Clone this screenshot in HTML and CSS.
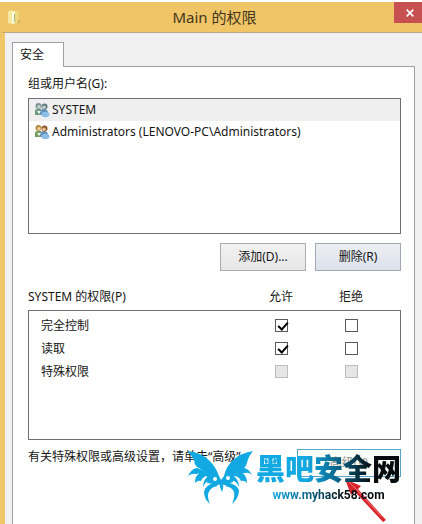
FILE: index.html
```
<!DOCTYPE html>
<html lang="zh-CN">
<head>
<meta charset="utf-8">
<title>Main 的权限</title>
<link rel="stylesheet" href="styles.css">
</head>
<body>
<main class="window">
  <header class="titlebar">
    <svg class="folder" viewBox="0 0 14 16" aria-hidden="true">
      <path d="M1 2l5-1v14l-5-1z" fill="#f6e9a4"/>
      <path d="M6 2h6v12l-6 1z" fill="#eed77c"/>
      <path d="M5 3l3-1v12l-3 1z" fill="#fffbd8"/>
      <path d="M7.500 5v8" stroke="#9fb88d" fill="none"/>
      <path d="M12 10l1 1v3l-3 .5" fill="#d3b657"/>
    </svg>
    <h1 class="title">Main 的权限</h1>
    <button class="close" type="button" aria-label="关闭">
      <svg viewBox="0 0 8 8" aria-hidden="true"><path d="M.7.7l6.600 6.600M7.300.7L.7 7.300" stroke="#fff" stroke-width="1.700"/></svg>
    </button>
  </header>
  <div class="content">
    <div class="tabs" role="tablist"><button class="tab" type="button" role="tab" aria-selected="true">安全</button></div>
    <section class="panel">
      <p class="caption">组或用户名(G):</p>
      <ul class="box users">
        <li class="user selected">
          <svg class="people" viewBox="0 0 16 16" aria-hidden="true">
            <path d="M1 13V9q0-2 3-2h3v6z" fill="#6d9a80"/><circle cx="4.500" cy="4" r="3" fill="#7e9494"/><circle cx="5" cy="4.800" r="1.700" fill="#c9d3cc"/>
            <path d="M6 13V9q1-2 4-2t4 3v3z" fill="#6390b5"/><circle cx="10.500" cy="4.500" r="3" fill="#61787f"/><circle cx="10" cy="5.200" r="1.800" fill="#c3cfd0"/>
            <ellipse cx="11.500" cy="12.500" rx="4" ry="2.800" fill="#8bbde6"/><path d="M3 9l2 3 2-3" fill="#eef6ef"/>
          </svg>SYSTEM</li>
        <li class="user">
          <svg class="people" viewBox="0 0 16 16" aria-hidden="true">
            <path d="M1 13V9q0-2 3-2h3v6z" fill="#759c62"/><circle cx="4.500" cy="4" r="3" fill="#b5893c"/><circle cx="5" cy="4.800" r="1.700" fill="#f0d3a0"/>
            <path d="M6 13V9q1-2 4-2t4 3v3z" fill="#6390b5"/><circle cx="10.500" cy="4.500" r="3" fill="#8a5a2c"/><circle cx="10" cy="5.200" r="1.800" fill="#e9c08e"/>
            <ellipse cx="11.500" cy="12.500" rx="4" ry="2.800" fill="#8bbde6"/><path d="M3 9l2 3 2-3" fill="#eef6ef"/>
          </svg>Administrators (LENOVO-PC\Administrators)</li>
      </ul>
      <div class="actions">
        <button class="button" type="button">添加(D)...</button>
        <button class="button cool" type="button">删除(R)</button>
      </div>
      <div class="heading">
        <span>SYSTEM 的权限(P)</span><span class="column">允许</span><span class="column">拒绝</span>
      </div>
      <div class="box permissions">
        <table>
          <tr><th scope="row">完全控制</th><td><input type="checkbox" checked aria-label="完全控制 允许"></td><td><input type="checkbox" aria-label="完全控制 拒绝"></td></tr>
          <tr><th scope="row">读取</th><td><input type="checkbox" checked aria-label="读取 允许"></td><td><input type="checkbox" aria-label="读取 拒绝"></td></tr>
          <tr><th scope="row">特殊权限</th><td><input type="checkbox" disabled aria-label="特殊权限 允许"></td><td><input type="checkbox" disabled aria-label="特殊权限 拒绝"></td></tr>
        </table>
      </div>
      <footer class="advanced">
        <p>有关特殊权限或高级设置，请单击“高级”。</p>
        <button class="button faint" type="button">高级(V)</button>
        <svg class="arrow" viewBox="0 0 42 44" aria-hidden="true">
          <path d="M0 0L16 7L13 10L41 41L38 43L10 13L6 16z" fill="#d8242c"/><path d="M2 1L11 10L37 38" stroke="#ef7777" fill="none"/>
        </svg>
        <div class="watermark">
          <svg class="bat" viewBox="0 0 68 56" aria-hidden="true">
            <g fill="#12a9e3">
              <path d="M0 0Q11 1 18 6Q28 13 32 25L34 29L37 25Q39 16 45 10Q53 2 66 0Q61 6 60 12Q58 19 50 22Q46 25 46 31L41 33Q36 32 34 35Q31 32 27 33L20 32Q22 26 18 23Q16 19 10 16Q7 13 7 9Q5 4 0 0z"/>
              <path d="M1 25Q5 17 10 17Q17 19 21 24Q15 21 9 23Q5 22 1 25zM8 32Q8 24 13 22Q18 22 21 25Q16 25 14 30Q11 29 8 32zM16 36Q16 28 22 25L25 30Q20 28 16 36z"/>
              <path d="M65 24Q62 18 57 17Q50 19 47 23Q52 21 58 22Q62 21 65 24zM60 32Q60 24 54 21Q49 22 46 25Q52 25 54 30Q57 29 60 32zM52 36Q52 28 46 25L43 30Q48 28 52 36z"/>
              <path d="M29 31Q18 34 17 41Q17 48 23 53Q19 44 23 39Q26 35 33 35zM38 31Q50 33 52 39Q52 47 45 53Q49 44 46 39Q43 35 35 35z"/>
              <path d="M32 34h5l-2 7z"/>
            </g>
            <circle cx="28" cy="28" r="2" fill="#fff"/><circle cx="41" cy="27" r="2" fill="#fff"/>
            <path d="M30 34l2 4 1-4zM36 34l1 4 2-4z" fill="#fff"/>
          </svg>
          <div class="brand"><strong class="brand-name">黑吧安全网</strong><span class="brand-url">www.myhack58.com</span></div>
        </div>
      </footer>
    </section>
  </div>
</main>
</body>
</html>
```
FILE: styles.css
```
* { box-sizing: border-box; }
html, body { height: 100%; }
body {
  margin: 0;
  overflow: hidden;
  background: #fff;
  color: #151515;
  font: 12px/16px "Noto Sans", "Noto Sans CJK SC", sans-serif;
}
p, h1, ul { margin: 0; padding: 0; }
button { font: inherit; color: inherit; }

.window {
  display: flex;
  flex-direction: column;
  height: 100%;
  padding-top: 2px;
}
.titlebar {
  display: flex;
  align-items: flex-start;
  height: 30px;
  flex: none;
  padding-left: 7px;
  background: #efc567;
}
.folder { width: 14px; height: 16px; margin-top: 7px; }
.title {
  flex: 1;
  padding-left: 14px;
  text-align: center;
  font-size: 15px;
  font-weight: 400;
  line-height: 30px;
  color: #44361c;
}
.close {
  display: grid;
  place-items: center;
  width: 28px;
  height: 21px;
  padding: 0 0 0 4px;
  border: 0;
  background: #c75050;
}
.close svg { width: 8px; height: 8px; }
.content {
  display: flex;
  flex-direction: column;
  flex: 1;
  padding: 9px 7px 0;
  border-left: 5px solid #efc567;
  border-top: 1px solid #b9a684;
  background: #f0f0f0;
}
.tabs { display: flex; }
.tab {
  width: 52px;
  height: 25px;
  margin-bottom: -1px;
  padding: 0 12px 0 0;
  border: 1px solid #a0a0a4;
  border-bottom: 0;
  background: #fff;
  z-index: 1;
}
.panel {
  flex: 1;
  padding: 9px 13px 0 15px;
  border: 1px solid #a0a0a4;
  border-bottom: 0;
  background: #fff;
}
.caption { margin-bottom: 6px; }
.box { border: 1px solid #707074; }
.users { height: 136px; list-style: none; }
.user {
  display: flex;
  align-items: center;
  height: 22px;
  padding-left: 5px;
  gap: 2px;
}
.selected { background: #efefef; }
.people { width: 16px; height: 16px; }
.actions {
  display: flex;
  justify-content: flex-end;
  gap: 9px;
  margin: 9px 0 18px;
}
.button {
  width: 86px;
  height: 28px;
  padding: 0;
  border: 1px solid #acacac;
  background: linear-gradient(#f2f2f2, #e6e6e6);
}
.cool { border-color: #a0a8b4; background: linear-gradient(#eceef2, #dce2ec); }
.heading, .permissions tr {
  display: grid;
  grid-template-columns: 1fr 70px 70px;
  align-items: center;
}
.heading { margin-bottom: 5px; padding-right: 15px; }
.column { text-align: center; }
.permissions { height: 130px; padding: 3px 14px 0 12px; }
.permissions table, .permissions tbody { display: block; }
.permissions tr { height: 23px; }
.permissions th { padding: 0; text-align: left; font-weight: 400; }
.permissions td { display: flex; justify-content: center; padding: 0; }
.permissions input {
  appearance: none;
  width: 13px;
  height: 13px;
  margin: 0;
  border: 1px solid #5a5a5a;
  background: #fff;
}
.permissions input:checked::after {
  content: "";
  display: block;
  width: 4px;
  height: 8px;
  margin-left: 4px;
  border: solid #000;
  border-width: 0 2px 2px 0;
  transform: rotate(42deg);
}
.permissions input:disabled { border-color: #bcbcbc; background: #e6e6e6; }
.advanced {
  position: relative;
  display: flex;
  justify-content: space-between;
  padding-top: 9px;
}
.advanced p { white-space: nowrap; }
.faint {
  flex: none;
  width: 104px;
  border-color: #58a5c9;
  background: #fbfdf8;
  color: #8c958f;
  position: absolute;
  right: 0;
}
.watermark {
  position: absolute;
  top: 11px;
  right: 0;
  display: flex;
  gap: 1px;
}
.bat { width: 68px; height: 56px; }
.brand { display: flex; flex-direction: column; align-items: center; gap: 4px; }
.brand-name, .brand-url {
  background: linear-gradient(90deg, #12a9e3 35%, #07516f 62%, #050b0e 80%);
  background-clip: text;
  color: transparent;
}
.brand-name { font: 900 29px/32px "Noto Sans CJK SC", sans-serif; }
.brand-url {
  background-image: linear-gradient(90deg, #12a9e3, #07516f 40%, #050b0e 65%);
  font: 700 12px/16px "Liberation Sans Narrow", Roboto, sans-serif;
}
.arrow {
  position: absolute;
  top: 39px;
  right: 14px;
  width: 42px;
  height: 44px;
}
```
